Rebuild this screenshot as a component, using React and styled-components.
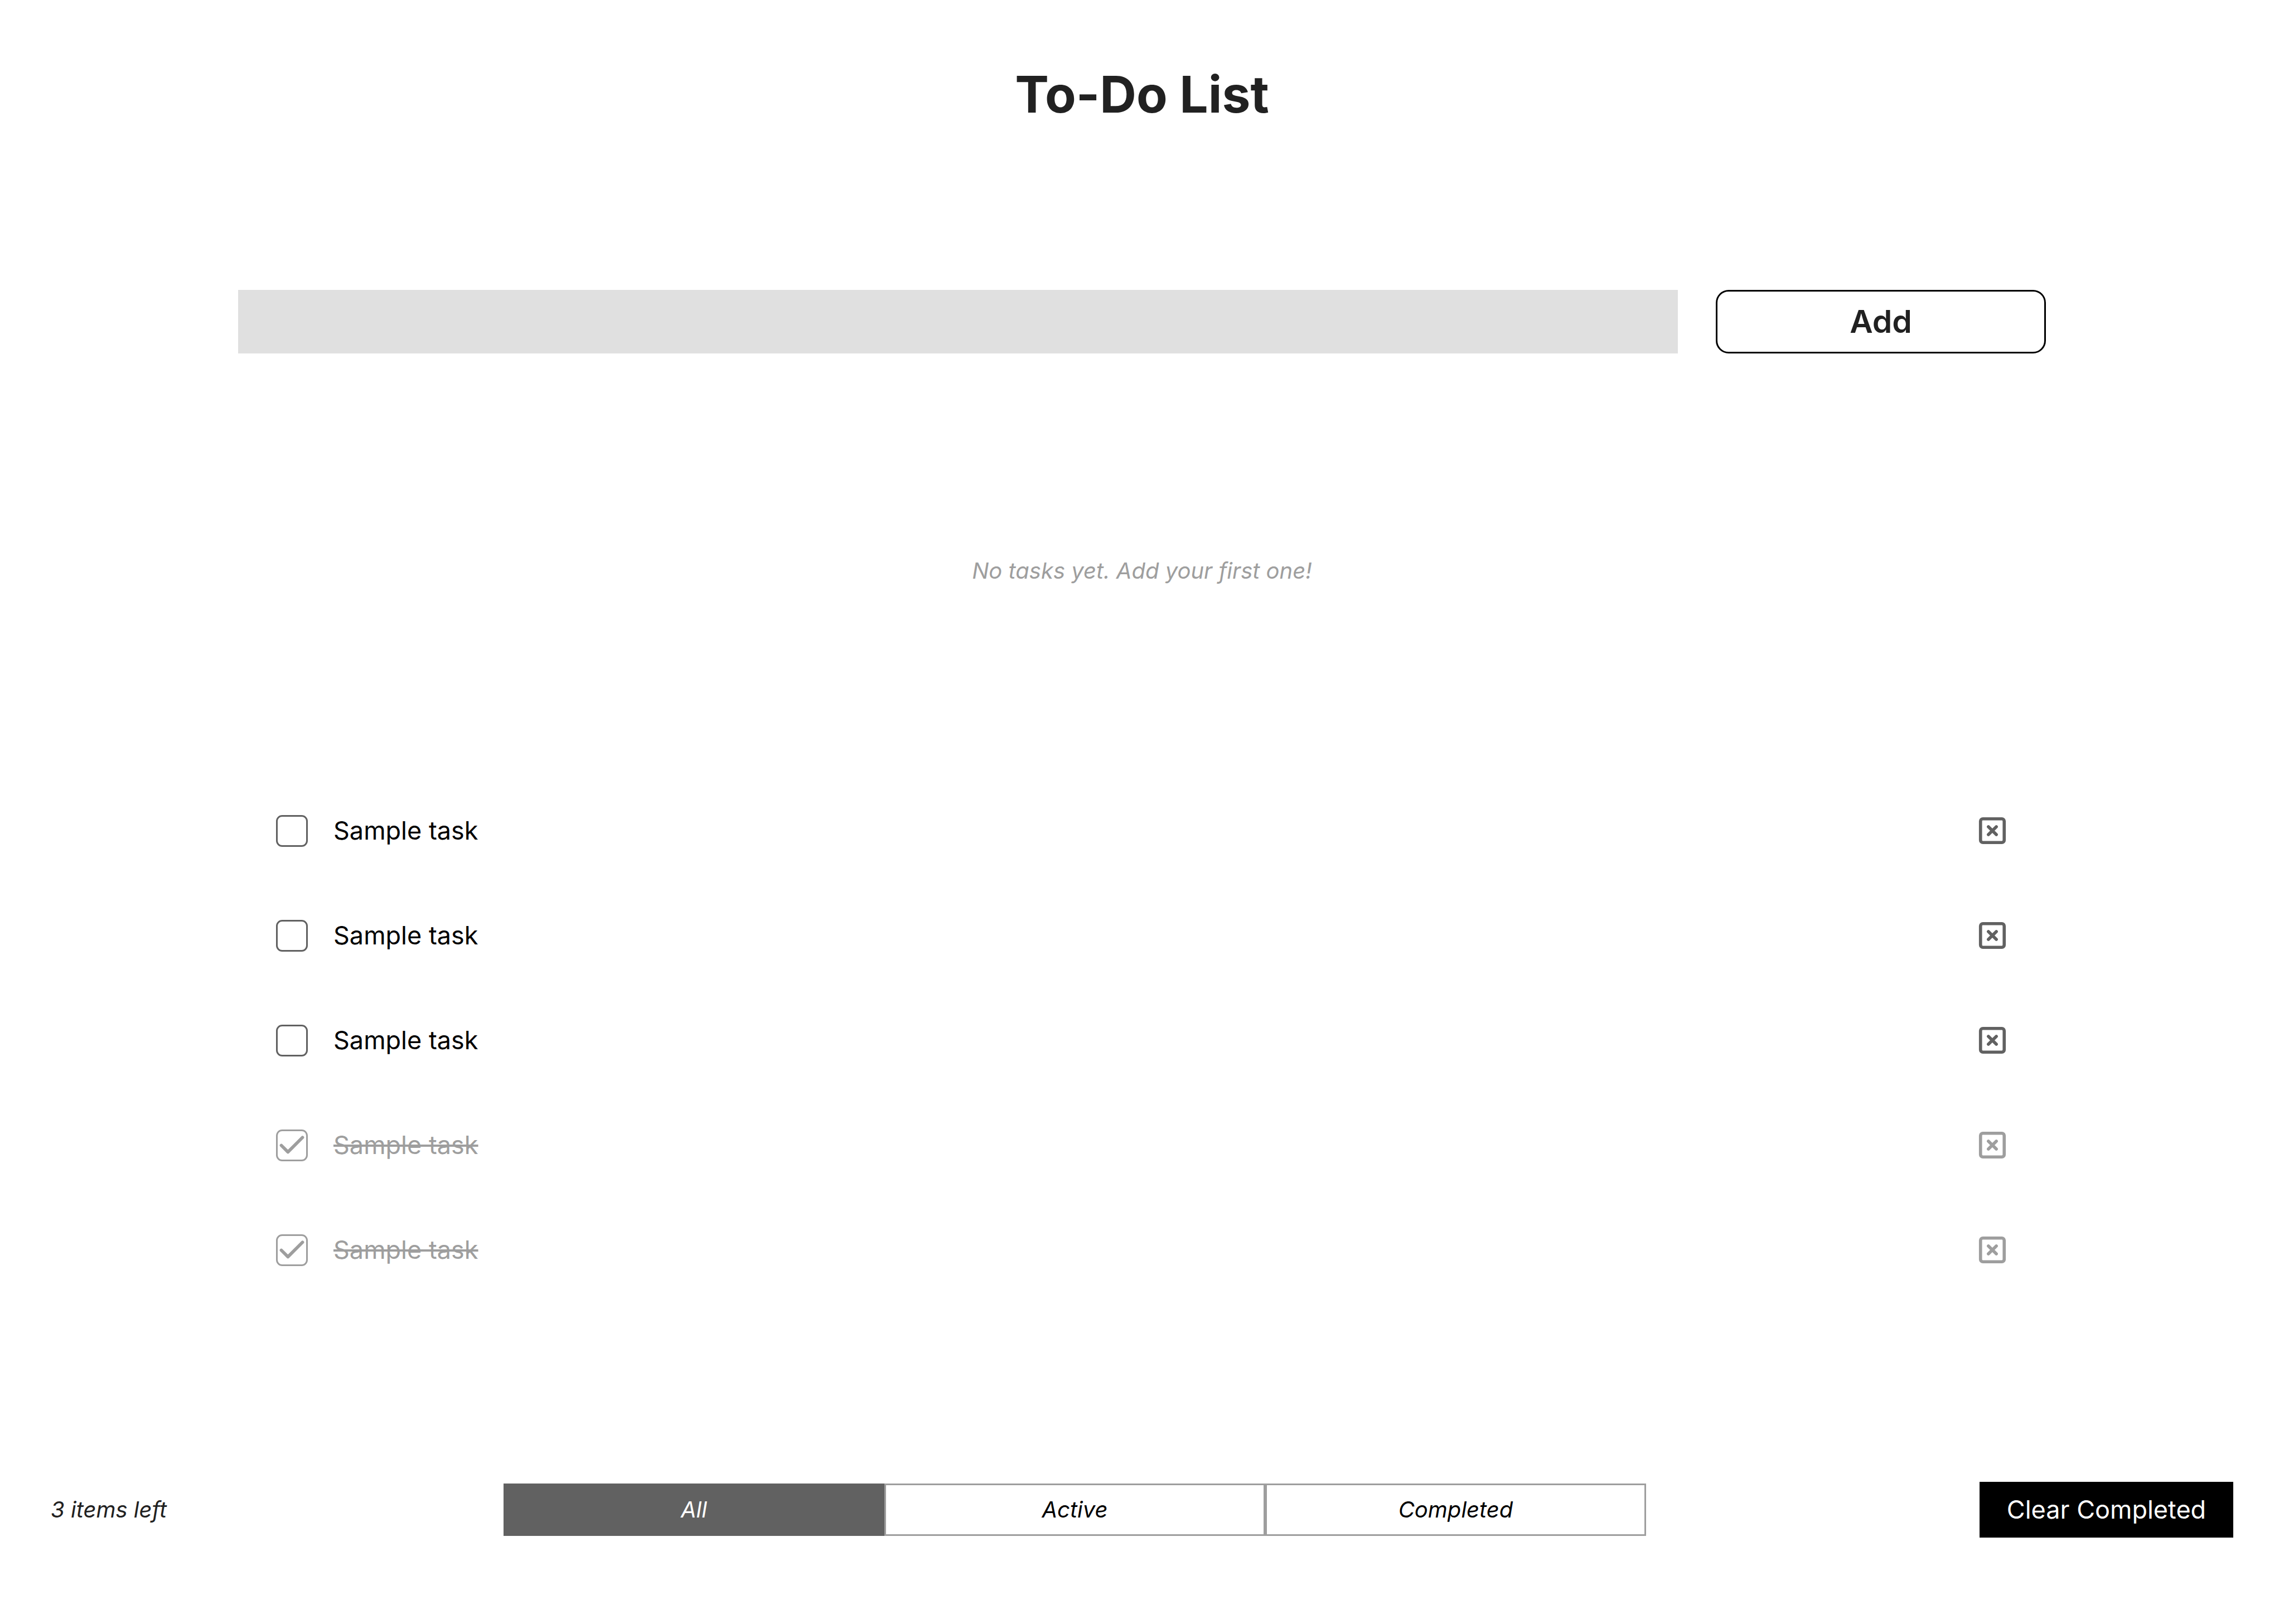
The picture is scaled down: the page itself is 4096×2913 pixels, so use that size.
import React, { useState } from "react";
import styled, { createGlobalStyle } from "styled-components";

const GlobalStyle = createGlobalStyle`
  *, *::before, *::after { box-sizing: border-box; }
  body {
    margin: 0;
    background: #fff;
    color: #000;
    font-family: Inter, "Liberation Sans", sans-serif;
  }
  button, input { font: inherit; color: inherit; }
`;

const Page = styled.div`
  display: flex;
  flex-direction: column;
  min-height: 100vh;
  padding-bottom: 155px;
`;

const Title = styled.h1`
  margin: 0;
  padding-top: 114px;
  text-align: center;
  font-size: 91px;
  line-height: 110px;
  font-weight: 700;
  color: #212121;
`;

const Main = styled.main`
  display: flex;
  flex-direction: column;
  padding: 0 427px;
`;

const AddForm = styled.form`
  display: flex;
  gap: 68px;
  margin-top: 296px;
`;

const TaskInput = styled.input`
  flex: 1;
  min-width: 0;
  height: 114px;
  padding: 0 46px;
  border: 0;
  border-radius: 0;
  background: #e0e0e0;
  font-size: 45px;
`;

const AddButton = styled.button`
  width: 592px;
  height: 114px;
  padding: 0;
  border: 3px solid #000;
  border-radius: 23px;
  background: #fff;
  color: #212121;
  font-size: 57px;
  line-height: 68px;
  font-weight: 600;
  cursor: pointer;
`;

const EmptyNote = styled.p`
  margin: 366px 0 0;
  text-align: center;
  font-size: 40px;
  line-height: 48px;
  font-style: italic;
  color: #9e9e9e;
`;

const TaskList = styled.ul`
  display: flex;
  flex-direction: column;
  gap: 46px;
  margin: 371px 0 0;
  padding: 0 62px 0 68px;
  list-style: none;
`;

const TaskRow = styled.li`
  display: flex;
  align-items: center;
  justify-content: space-between;
  height: 142px;
  color: ${(p) => (p.$done ? "#9e9e9e" : "#616161")};
`;

const TaskLabel = styled.label`
  display: flex;
  align-items: center;
  gap: 46px;
  cursor: pointer;
`;

const CheckBox = styled.span`
  display: grid;
  width: 57px;
  height: 57px;

  > * { grid-area: 1 / 1; }
`;

const CheckInput = styled.input`
  appearance: none;
  width: 57px;
  height: 57px;
  margin: 0;
  border: 3px solid currentColor;
  border-radius: 11px;
  background: #fff;
  cursor: pointer;
`;

const CheckMark = styled.svg`
  width: 57px;
  height: 57px;
  pointer-events: none;
`;

const TaskText = styled.span`
  font-size: 45px;
  line-height: 54px;
  color: ${(p) => (p.$done ? "#9e9e9e" : "#000")};
  text-decoration: ${(p) => (p.$done ? "line-through" : "none")};
`;

const DeleteButton = styled.button`
  display: flex;
  padding: 0;
  border: 0;
  background: none;
  cursor: pointer;
`;

const Footer = styled.footer`
  display: flex;
  align-items: center;
  justify-content: space-between;
  margin-top: auto;
  padding: 0 91px;
`;

const Count = styled.span`
  min-width: 214px;
  font-size: 40px;
  line-height: 50px;
  font-style: italic;
  color: #212121;
`;

const Filters = styled.div`
  display: flex;
`;

const FilterButton = styled.button`
  width: 683px;
  height: 94px;
  padding: 0;
  border: 3px solid ${(p) => (p.$active ? "#616161" : "#9e9e9e")};
  background: ${(p) => (p.$active ? "#616161" : "#fff")};
  color: ${(p) => (p.$active ? "#fff" : "#000")};
  font-size: 40px;
  line-height: 50px;
  font-style: italic;
  cursor: pointer;
`;

const ClearButton = styled.button`
  width: 455px;
  height: 100px;
  padding: 0;
  border: 0;
  background: #000;
  color: #fff;
  font-size: 45px;
  line-height: 54px;
  cursor: pointer;
`;

const DeleteIcon = () => (
  <svg width="68" height="68" viewBox="0 0 24 24" fill="none" stroke="currentColor" strokeWidth="2" strokeLinecap="round" aria-hidden="true">
    <rect x="4.5" y="4.5" width="15" height="15" rx="1.5" />
    <path d="M9.5 9.5l5 5M14.5 9.5l-5 5" />
  </svg>
);

const initialTasks = [
  { id: 1, text: "Sample task", done: false },
  { id: 2, text: "Sample task", done: false },
  { id: 3, text: "Sample task", done: false },
  { id: 4, text: "Sample task", done: true },
  { id: 5, text: "Sample task", done: true },
];

const filters = ["All", "Active", "Completed"];

export default function App() {
  const [tasks, setTasks] = useState(initialTasks);
  const [filter, setFilter] = useState("All");
  const [draft, setDraft] = useState("");

  const visible = tasks.filter(
    (t) => filter === "All" || (filter === "Completed") === t.done
  );
  const left = tasks.filter((t) => !t.done).length;

  const addTask = (e) => {
    e.preventDefault();
    if (!draft.trim()) return;
    setTasks([...tasks, { id: Date.now(), text: draft.trim(), done: false }]);
    setDraft("");
  };
  const toggle = (id) =>
    setTasks(tasks.map((t) => (t.id === id ? { ...t, done: !t.done } : t)));

  return (
    <>
      <GlobalStyle />
      <Page>
        <Title>To-Do List</Title>
        <Main>
          <AddForm onSubmit={addTask}>
            <TaskInput
              type="text"
              aria-label="New task"
              value={draft}
              onChange={(e) => setDraft(e.target.value)}
            />
            <AddButton type="submit">Add</AddButton>
          </AddForm>
          <EmptyNote>No tasks yet. Add your first one!</EmptyNote>
          <TaskList>
            {visible.map((t) => (
              <TaskRow key={t.id} $done={t.done}>
                <TaskLabel>
                  <CheckBox>
                    <CheckInput type="checkbox" checked={t.done} onChange={() => toggle(t.id)} />
                    {t.done && (
                      <CheckMark viewBox="0 0 20 20" fill="none" stroke="currentColor" strokeWidth="2" strokeLinecap="round" strokeLinejoin="round" aria-hidden="true">
                        <path d="M3.33 10L7.5 14.17L16.67 5" />
                      </CheckMark>
                    )}
                  </CheckBox>
                  <TaskText $done={t.done}>{t.text}</TaskText>
                </TaskLabel>
                <DeleteButton
                  type="button"
                  aria-label="Delete task"
                  onClick={() => setTasks(tasks.filter((x) => x.id !== t.id))}
                >
                  <DeleteIcon />
                </DeleteButton>
              </TaskRow>
            ))}
          </TaskList>
        </Main>
        <Footer>
          <Count>{left} items left</Count>
          <Filters>
            {filters.map((f) => (
              <FilterButton key={f} type="button" $active={f === filter} onClick={() => setFilter(f)}>
                {f}
              </FilterButton>
            ))}
          </Filters>
          <ClearButton type="button" onClick={() => setTasks(tasks.filter((t) => !t.done))}>
            Clear Completed
          </ClearButton>
        </Footer>
      </Page>
    </>
  );
}
